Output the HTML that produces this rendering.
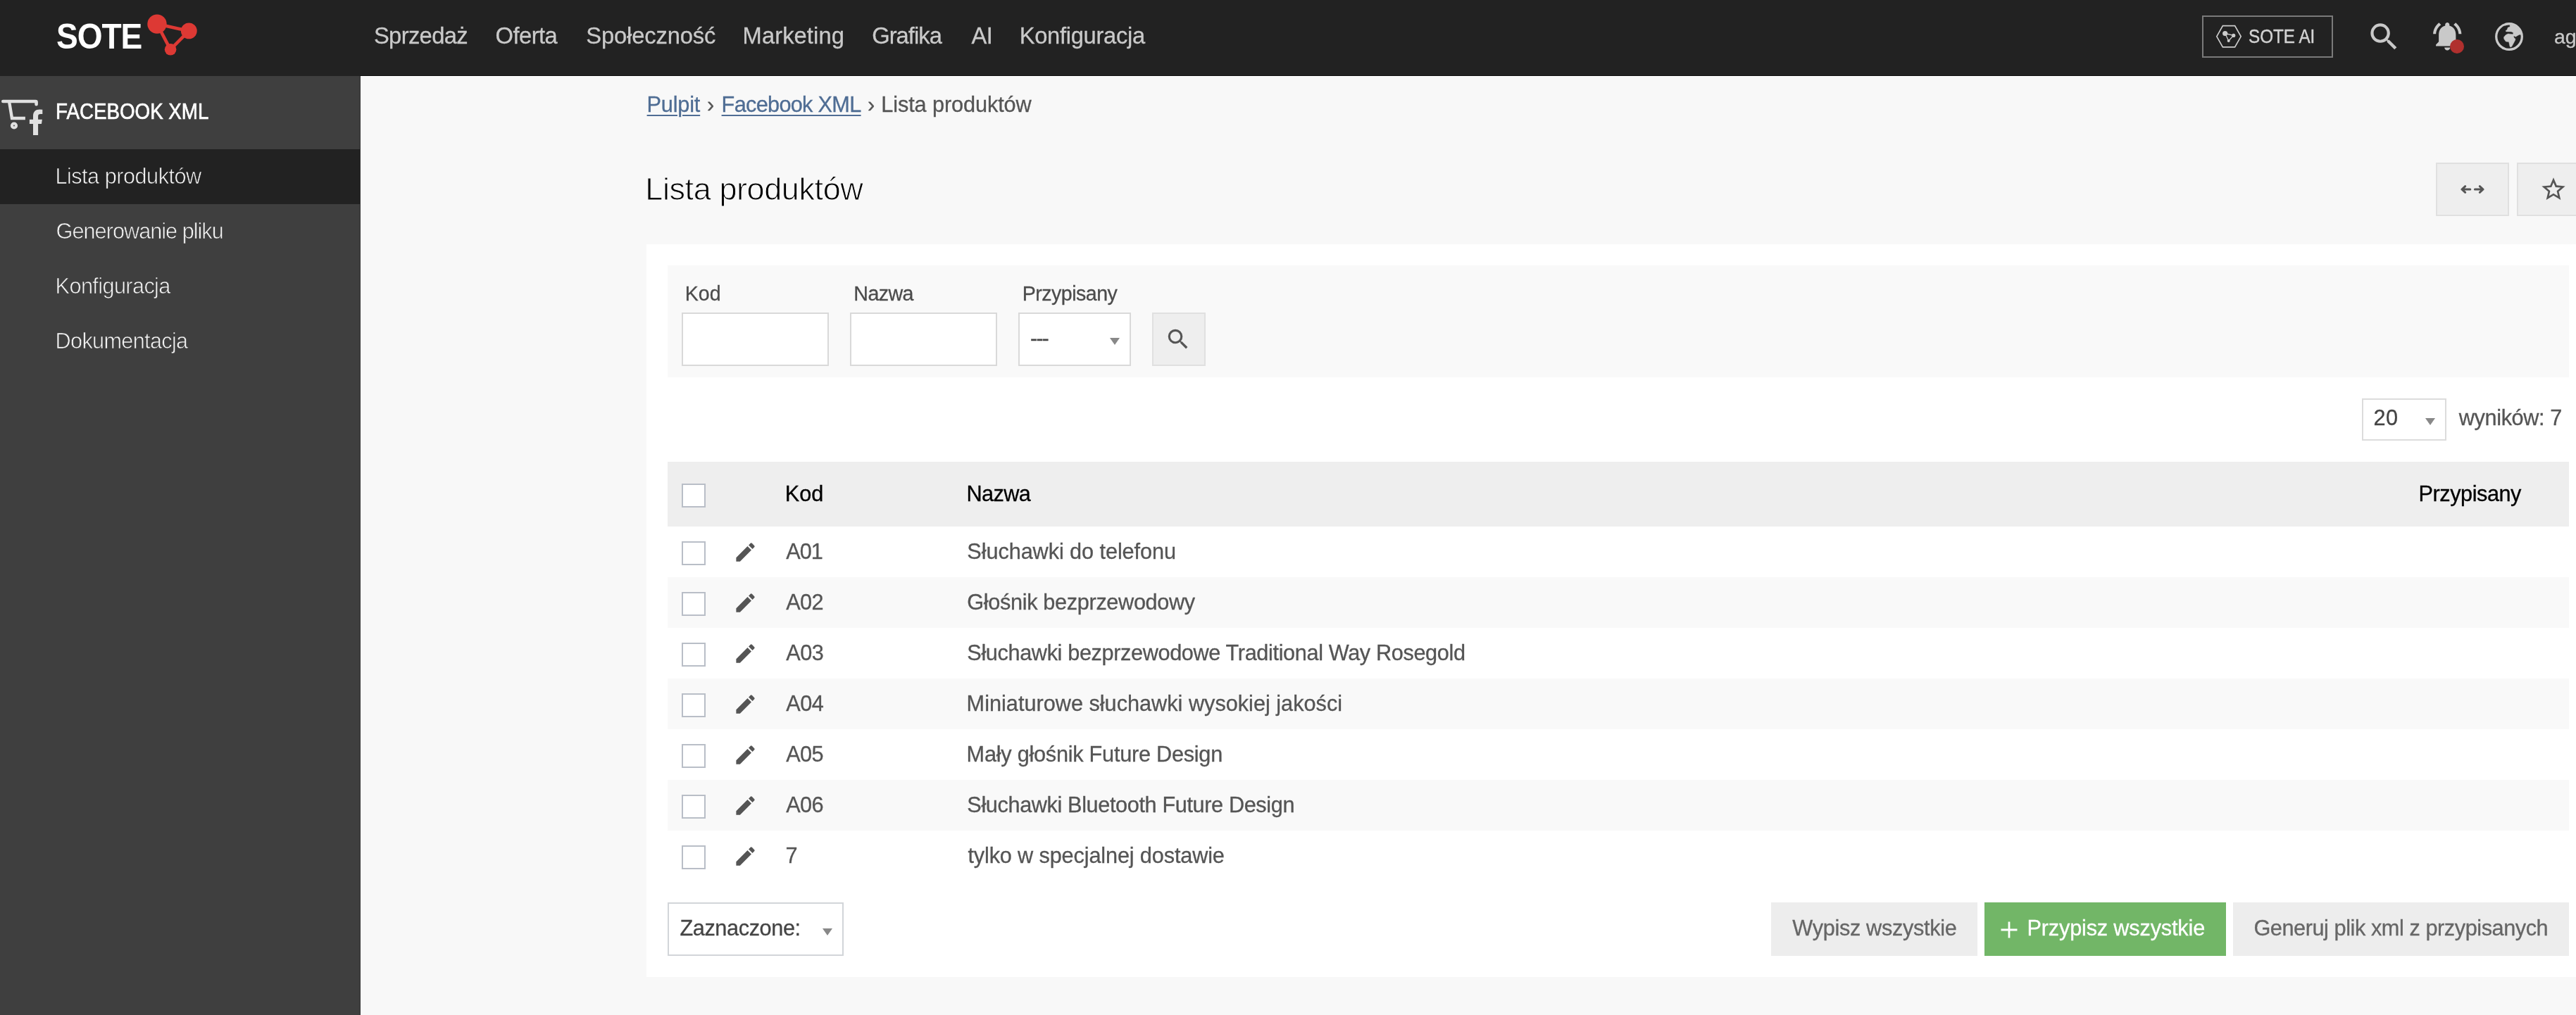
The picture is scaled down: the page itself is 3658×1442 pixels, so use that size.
<!DOCTYPE html>
<html lang="pl">
<head>
<meta charset="utf-8">
<title>Lista produktów - Facebook XML</title>
<style>
*{box-sizing:border-box;margin:0;padding:0}
html,body{width:3658px;height:1442px;overflow:hidden;background:#f8f8f8}
body{position:relative;will-change:transform;font-family:"Liberation Sans",Arial,sans-serif;font-size:30.7px;color:#555;-webkit-text-stroke:.3px}
a{color:inherit;text-decoration:none}
.abs,.t{position:absolute;white-space:nowrap}
.t{line-height:35px}
svg{position:absolute;display:block;overflow:visible}

/* top bar */
#top{position:absolute;left:0;top:0;width:3658px;height:108px;background:#222;color:#c9c9c9;border-bottom:1px solid #222}
#top:after{content:"";position:absolute;left:511px;top:107px;width:3147px;height:1px;background:#121212}
#logo{font-weight:bold;color:#fff;font-size:50.5px;line-height:57px;left:79.5px;top:23px;-webkit-text-stroke:0}
#nav a{font-size:32.7px;line-height:37px;top:32px}
#ai{left:3127px;top:22px;width:186px;height:60px;border:2px solid #7a7a7a}
#ai .t{font-size:26.9px;line-height:30px;left:64px;top:12.6px;color:#d2d2d2;-webkit-text-stroke:.45px #d2d2d2}
#user{font-size:28.5px;line-height:32px;left:3627px;top:36px}

/* sidebar */
#side{position:absolute;left:0;top:108px;width:512px;height:1334px;background:#3f3f3f;color:#e6e6e6;border-right:1px solid #333}
main:before{content:"";position:absolute;left:512px;top:108px;width:3146px;height:1334px;border-left:1px solid #fff;border-top:1px solid #fff}
#side .on{position:absolute;left:0;top:104px;width:511px;height:78px;background:#222}
#mod{font-size:31px;font-weight:normal;-webkit-text-stroke:.7px #fff;color:#fff;left:79px;top:32.7px}
#side li{list-style:none}
#side li a{font-size:30.7px;left:80px;color:#f4f4f4;-webkit-text-stroke:.7px #3f3f3f}
#side li a#s1{-webkit-text-stroke-color:#222}

/* main */
#crumbs .t{font-size:30.7px;top:131px}
#crumbs a{color:#4f6d94;text-decoration:underline;text-decoration-thickness:2px;text-underline-offset:4px}
h1.t{font-weight:normal;font-size:45px;color:#000;-webkit-text-stroke:1px #f8f8f8;line-height:51px;left:917.5px;top:242.8px}
.ibtn{position:absolute;background:#eee;border:2px solid #e0e0e0}
#panel{position:absolute;left:918px;top:347px;width:2760px;height:1041px;background:#fff}
#filter{position:absolute;left:30px;top:30px;width:2700px;height:159px;background:#f9f9f9}
#filter label{font-size:28.6px;line-height:32px;top:24px;color:#4c4c4c}
.inp{position:absolute;background:#fff;border:2px solid #d9d9d9;border-radius:0;outline:0;font:inherit;display:block}
.arrow{position:absolute;width:0;height:0;border-left:7.5px solid transparent;border-right:7.5px solid transparent;border-top:10px solid #888}
#pager .t{top:229px}
table{position:absolute;left:30px;top:309px;width:2700px;border-collapse:collapse;table-layout:fixed}
th,td{text-align:left;font-weight:normal;font-size:30.7px;line-height:35px;padding:18px 0 0;vertical-align:top;white-space:nowrap;position:relative}
th{padding-top:28px}
thead tr{height:92px;background:#eee;color:#000}
tbody tr{height:72px}
tbody tr:nth-child(even){background:#f9f9f9}
.cb{position:absolute;left:20px;top:21px;width:34px;height:34px;background:#fff;border:2px solid #b9bec7;border-radius:0;margin:0;appearance:none;-webkit-appearance:none;display:block}
thead .cb{top:31px}
td svg{left:19.4px;top:18.7px}
.btn{position:absolute;top:935px;height:76px;background:#ededed;color:#666}
.btn .t{top:19px}

/* per-element width fitting (Roboto metrics -> Liberation Sans) */
#logo{letter-spacing:-1.2px;transform:scaleX(.913);transform-origin:0 0}
#aitxt{transform:scaleX(.902);transform-origin:0 0}
#mod{transform:scaleX(.895);transform-origin:0 0}
th span,td span{position:relative}
/*FIT*/
#n1{letter-spacing:-0.62px;margin-left:-0.5px}
#n2{letter-spacing:-0.52px;margin-left:-0.2px}
#n3{letter-spacing:-0.13px;margin-left:0.7px}
#n4{letter-spacing:0.09px;margin-left:0.6px}
#n5{letter-spacing:-0.95px;margin-left:0.4px}
#n6{letter-spacing:-0.58px;margin-left:0.6px}
#n7{letter-spacing:-0.30px;margin-left:0.3px}
#s1{letter-spacing:-0.51px;margin-left:-1.6px}
#s2{letter-spacing:-1.00px;margin-left:-0.4px}
#s3{letter-spacing:-0.62px;margin-left:-1.4px}
#s4{letter-spacing:-0.69px;margin-left:-1.4px}
#c1{letter-spacing:-0.20px}
#c3{letter-spacing:-0.70px}
#c5{letter-spacing:-0.10px;margin-left:-0.4px}
#h1{letter-spacing:-0.41px;margin-left:-1.2px}
#f1{letter-spacing:0.03px;margin-left:-0.3px}
#f2{letter-spacing:-0.55px;margin-left:-0.1px}
#f3{letter-spacing:-0.52px;margin-left:0.1px}
#p1{letter-spacing:0.41px;margin-left:-0.4px}
#p2{letter-spacing:-0.39px;margin-left:-0.2px}
#h_kod{letter-spacing:-0.10px;margin-left:-1.2px}
#h_naz{letter-spacing:-0.60px;margin-left:-1.5px}
#h_prz{letter-spacing:-0.46px;margin-left:-1.5px}
#k1{letter-spacing:-0.99px;margin-left:0.2px}
#k2{letter-spacing:-0.55px;margin-left:0.2px}
#r1{letter-spacing:-0.09px;margin-left:-0.7px}
#r2{letter-spacing:-0.35px;margin-left:-0.7px}
#r3{letter-spacing:-0.38px;margin-left:-0.7px}
#r4{letter-spacing:-0.01px;margin-left:-1.4px}
#r5{letter-spacing:-0.26px;margin-left:-1.4px}
#r6{letter-spacing:-0.39px;margin-left:-0.7px}
#r7{letter-spacing:-0.15px;margin-left:0.4px}
#z1{letter-spacing:-0.40px;margin-left:-0.6px}
#b1{letter-spacing:-0.33px;margin-left:-0.4px}
#b2{letter-spacing:-0.18px;margin-left:-0.5px}
#b3{letter-spacing:-0.44px;margin-left:-0.6px}
#k3{letter-spacing:-0.53px;margin-left:0.2px}
#k4{letter-spacing:-0.52px;margin-left:0.2px}
#k5{letter-spacing:-0.55px;margin-left:0.2px}
#k6{letter-spacing:-0.58px;margin-left:0.2px}
#k7{letter-spacing:7.18px;margin-left:-0.5px}
/*ENDFIT*/
</style>
</head>
<body>

<header id="top">
  <a class="t" id="logo">SOTE</a>
  <svg id="logoicon" style="left:200px;top:0" width="100" height="108" viewBox="200 0 100 108">
    <g stroke="#dd3934" stroke-width="4.6" fill="none"><path d="M223 34 L268.3 44 L242 70.3 Z"/></g>
    <g fill="#dd3934"><circle cx="223" cy="34.1" r="13.7"/><circle cx="268.3" cy="43.9" r="11.4"/><circle cx="242.1" cy="70.3" r="8.3"/></g>
  </svg>
  <nav id="nav">
    <a class="t" id="n1" style="left:531.4px">Sprzedaż</a>
    <a class="t" id="n2" style="left:703.7px">Oferta</a>
    <a class="t" id="n3" style="left:831.6px">Społeczność</a>
    <a class="t" id="n4" style="left:1054px">Marketing</a>
    <a class="t" id="n5" style="left:1237.8px">Grafika</a>
    <a class="t" id="n6" style="left:1379px">AI</a>
    <a class="t" id="n7" style="left:1447.4px">Konfiguracja</a>
  </nav>
  <a class="abs" id="ai">
    <svg style="left:16px;top:8px" width="40" height="36" viewBox="3145 32 40 36">
      <path d="M3147.8 51.8 L3156.4 36.7 H3173.6 L3182.2 51.8 L3173.6 66.9 H3156.4 Z" fill="none" stroke="#ccc" stroke-width="1.7"/>
      <path d="M3159.7 47.5 L3171.7 50.4 L3164.7 58 Z" fill="none" stroke="#ccc" stroke-width="1.3"/>
      <circle cx="3159.7" cy="47.5" r="3.6" fill="#ccc"/><circle cx="3171.7" cy="50.4" r="2.6" fill="#ccc"/><circle cx="3164.7" cy="58" r="2" fill="#ccc"/>
    </svg>
    <span class="t" id="aitxt">SOTE AI</span>
  </a>
  <svg style="left:3360.45px;top:26.55px" width="50.8" height="50.8" viewBox="0 0 24 24" fill="#c9c9c9"><path d="M15.5 14h-.79l-.28-.27A6.471 6.471 0 0 0 16 9.5 6.5 6.5 0 1 0 9.5 16c1.61 0 3.09-.59 4.23-1.57l.27.28v.79l5 4.99L20.49 19l-4.99-5zm-6 0C7.01 14 5 11.99 5 9.5S7.01 5 9.5 5 14 7.01 14 9.5 11.99 14 9.5 14z"/></svg>
  <svg style="left:3450.9px;top:27.3px" width="48.5" height="48.5" viewBox="0 0 24 24" fill="#c9c9c9"><path d="M7.58 4.08L6.15 2.65C3.75 4.48 2.17 7.3 2.03 10.5h2c.15-2.65 1.51-4.97 3.55-6.42zm12.39 6.42h2c-.15-3.2-1.73-6.02-4.12-7.85l-1.42 1.43c2.02 1.45 3.39 3.77 3.54 6.42zM18 11c0-3.07-1.64-5.64-4.5-6.32V4c0-.83-.67-1.5-1.5-1.5s-1.5.67-1.5 1.5v.68C7.63 5.36 6 7.92 6 11v5l-2 2v1h16v-1l-2-2v-5zm-6 11c.14 0 .27-.01.4-.04.65-.14 1.18-.58 1.44-1.18.1-.24.15-.5.15-.78h-4c.01 1.1.9 2 2.01 2z"/></svg>
  <div class="abs" style="left:3479px;top:56px;width:20px;height:20px;border-radius:50%;background:#b0302e"></div>
  <svg style="left:3535px;top:25px" width="56" height="54" viewBox="0 0 1053 1015">
    <circle cx="527" cy="508" r="344" fill="none" stroke="#c9c9c9" stroke-width="62"/>
    <path d="M545 186 L550 245 L495 262 L470 330 L435 350 L445 374 L585 378 L640 405 L630 445 L580 440 L500 430 L440 460 L385 520 L390 570 L440 640 L520 650 L545 770 L565 790 L600 770 L660 660 L690 600 L695 570 L660 540 L645 500 L665 492 L700 512 L740 490 L800 455 L848 456 A325 325 0 0 0 545 186 Z" fill="#c9c9c9" stroke="#c9c9c9" stroke-width="8" stroke-linejoin="round"/>
  </svg>
  <span class="t" id="user">ag</span>
</header>

<aside id="side">
  <svg style="left:0;top:28px" width="64" height="60" viewBox="0 136 64 60">
    <path d="M4.3 144 H50.5 Q51.6 144 51.6 145.1 V148.3" fill="none" stroke="#e0e0e0" stroke-width="4.6" stroke-linecap="round" stroke-linejoin="round"/>
    <path d="M13 144 L17 168 H35.9" fill="none" stroke="#e0e0e0" stroke-width="4.4" stroke-linejoin="miter"/>
    <circle cx="20" cy="178.5" r="3" fill="none" stroke="#e0e0e0" stroke-width="4.2"/>
    <path d="M47 192 V176 H41.9 V169.7 H47 V165 C47 158.6 50.6 155.5 56.4 155.5 Q58.6 155.5 60.3 155.8 V162 H57.6 C54.9 162 54.1 163 54.1 165.3 V169.7 H59.9 L59 176 H54.1 V192 Z" fill="#e0e0e0"/>
  </svg>
  <span class="t" id="mod">FACEBOOK XML</span>
  <div class="on"></div>
  <ul>
    <li><a class="t" id="s1" style="top:125px">Lista produktów</a></li>
    <li><a class="t" id="s2" style="top:203px">Generowanie pliku</a></li>
    <li><a class="t" id="s3" style="top:281px">Konfiguracja</a></li>
    <li><a class="t" id="s4" style="top:359px">Dokumentacja</a></li>
  </ul>
</aside>

<main>
  <div id="crumbs">
    <a class="t" id="c1" style="left:918.6px">Pulpit</a>
    <span class="t" id="c2" style="left:1004px">›</span>
    <a class="t" id="c3" style="left:1024.6px">Facebook XML</a>
    <span class="t" id="c4" style="left:1232px">›</span>
    <span class="t" id="c5" style="left:1251.6px">Lista produktów</span>
  </div>
  <h1 class="t" id="h1">Lista produktów</h1>
  <div class="ibtn" style="left:3459px;top:231px;width:104px;height:76px">
    <svg style="left:33px;top:30px" width="34" height="12" viewBox="0 0 34 12" fill="none" stroke="#555" stroke-width="3" stroke-linecap="round" stroke-linejoin="round"><path d="M13.8 6 H2 M6.7 1.7 L1.9 6 L6.7 10.3 M20.4 6 H32 M27.3 1.7 L32.1 6 L27.3 10.3"/></svg>
  </div>
  <div class="ibtn" style="left:3574px;top:231px;width:104px;height:76px">
    <svg style="left:29.9px;top:16.3px" width="40" height="40" viewBox="0 0 24 24" fill="#555"><path d="M22 9.240l-7.190-.62L12 2 9.190 8.630 2 9.240l5.460 4.730L5.820 21 12 17.270 18.180 21l-1.630-7.030L22 9.240zM12 15.400l-3.760 2.270 1-4.280-3.320-2.880 4.380-.38L12 6.100l1.710 4.040 4.380.38-3.320 2.880 1 4.280L12 15.400z"/></svg>
  </div>

  <section id="panel">
    <form id="filter">
      <label class="t" id="f1" style="left:25px">Kod</label>
      <input class="inp" type="text" style="left:20px;top:67px;width:209px;height:76px">
      <label class="t" id="f2" style="left:264.4px">Nazwa</label>
      <input class="inp" type="text" style="left:259px;top:67px;width:209px;height:76px">
      <label class="t" id="f3" style="left:503.6px">Przypisany</label>
      <div class="inp" style="left:498px;top:67px;width:160px;height:76px">
        <span class="t" id="f4" style="left:15px;top:20px;font-size:30px;line-height:30px;color:#444;letter-spacing:-1.6px">---</span>
        <i class="arrow" style="left:128px;top:34px"></i>
      </div>
      <div class="ibtn" style="left:688px;top:67px;width:76px;height:76px">
        <svg style="left:16px;top:17px" width="38" height="38" viewBox="0 0 24 24" fill="#555"><path d="M15.5 14h-.79l-.28-.27A6.471 6.471 0 0 0 16 9.5 6.500 6.500 0 1 0 9.500 16c1.610 0 3.090-.59 4.230-1.570l.27.28v.79l5 4.990L20.490 19l-4.990-5zm-6 0C7.010 14 5 11.990 5 9.500S7.010 5 9.500 5 14 7.010 14 9.500 11.990 14 9.500 14z"/></svg>
      </div>
    </form>

    <div id="pager">
      <div class="inp" style="left:2436px;top:219px;width:120px;height:60px;border-color:#dcdcdc">
        <span class="t" id="p1" style="left:15px;top:8px;color:#444">20</span>
        <i class="arrow" style="left:88px;top:26px;border-left-width:7px;border-right-width:7px"></i>
      </div>
      <span class="t" id="p2" style="left:2574px">wyników: 7</span>
    </div>

    <table>
      <colgroup><col style="width:74px"><col style="width:94px"><col style="width:258px"><col style="width:2062px"><col></colgroup>
      <thead>
        <tr><th><input type="checkbox" class="cb"></th><th></th><th><span id="h_kod">Kod</span></th><th><span id="h_naz">Nazwa</span></th><th><span id="h_prz">Przypisany</span></th></tr>
      </thead>
      <tbody>
        <tr><td><input type="checkbox" class="cb"></td><td><svg width="35" height="35" viewBox="0 0 24 24" fill="#555"><path d="M3 17.250V21h3.750L17.810 9.940l-3.750-3.750L3 17.250zM20.710 7.040a.996.996 0 0 0 0-1.410l-2.340-2.340a.996.996 0 0 0-1.410 0l-1.830 1.830 3.750 3.750 1.830-1.830z"/></svg></td><td><span id="k1">A01</span></td><td><span id="r1">Słuchawki do telefonu</span></td><td></td></tr>
        <tr><td><input type="checkbox" class="cb"></td><td><svg width="35" height="35" viewBox="0 0 24 24" fill="#555"><path d="M3 17.250V21h3.750L17.810 9.940l-3.750-3.750L3 17.250zM20.710 7.040a.996.996 0 0 0 0-1.410l-2.340-2.340a.996.996 0 0 0-1.410 0l-1.830 1.830 3.750 3.750 1.830-1.830z"/></svg></td><td><span id="k2">A02</span></td><td><span id="r2">Głośnik bezprzewodowy</span></td><td></td></tr>
        <tr><td><input type="checkbox" class="cb"></td><td><svg width="35" height="35" viewBox="0 0 24 24" fill="#555"><path d="M3 17.250V21h3.750L17.810 9.940l-3.750-3.750L3 17.250zM20.710 7.040a.996.996 0 0 0 0-1.410l-2.340-2.340a.996.996 0 0 0-1.410 0l-1.830 1.830 3.750 3.750 1.830-1.830z"/></svg></td><td><span id="k3">A03</span></td><td><span id="r3">Słuchawki bezprzewodowe Traditional Way Rosegold</span></td><td></td></tr>
        <tr><td><input type="checkbox" class="cb"></td><td><svg width="35" height="35" viewBox="0 0 24 24" fill="#555"><path d="M3 17.250V21h3.750L17.810 9.940l-3.750-3.750L3 17.250zM20.710 7.040a.996.996 0 0 0 0-1.410l-2.340-2.340a.996.996 0 0 0-1.410 0l-1.830 1.830 3.750 3.750 1.830-1.830z"/></svg></td><td><span id="k4">A04</span></td><td><span id="r4">Miniaturowe słuchawki wysokiej jakości</span></td><td></td></tr>
        <tr><td><input type="checkbox" class="cb"></td><td><svg width="35" height="35" viewBox="0 0 24 24" fill="#555"><path d="M3 17.250V21h3.750L17.810 9.940l-3.750-3.750L3 17.250zM20.710 7.040a.996.996 0 0 0 0-1.410l-2.340-2.340a.996.996 0 0 0-1.410 0l-1.830 1.830 3.750 3.750 1.830-1.830z"/></svg></td><td><span id="k5">A05</span></td><td><span id="r5">Mały głośnik Future Design</span></td><td></td></tr>
        <tr><td><input type="checkbox" class="cb"></td><td><svg width="35" height="35" viewBox="0 0 24 24" fill="#555"><path d="M3 17.250V21h3.750L17.810 9.940l-3.750-3.750L3 17.250zM20.710 7.040a.996.996 0 0 0 0-1.410l-2.340-2.340a.996.996 0 0 0-1.410 0l-1.830 1.830 3.750 3.750 1.830-1.830z"/></svg></td><td><span id="k6">A06</span></td><td><span id="r6">Słuchawki Bluetooth Future Design</span></td><td></td></tr>
        <tr><td><input type="checkbox" class="cb"></td><td><svg width="35" height="35" viewBox="0 0 24 24" fill="#555"><path d="M3 17.250V21h3.750L17.810 9.940l-3.750-3.750L3 17.250zM20.710 7.040a.996.996 0 0 0 0-1.410l-2.340-2.340a.996.996 0 0 0-1.410 0l-1.830 1.830 3.750 3.750 1.830-1.830z"/></svg></td><td><span id="k7">7</span></td><td><span id="r7">tylko w specjalnej dostawie</span></td><td></td></tr>
      </tbody>
    </table>

    <div class="inp" style="left:30px;top:935px;width:250px;height:76px;border-color:#d2d5d9">
      <span class="t" id="z1" style="left:16px;top:17.4px;color:#444">Zaznaczone:</span>
      <i class="arrow" style="left:218px;top:34.5px"></i>
    </div>
    <a class="btn" style="left:1597px;width:293px"><span class="t" id="b1" style="left:30.7px">Wypisz wszystkie</span></a>
    <a class="btn" style="left:1900px;width:343px;background:#72b667;color:#fff">
      <svg style="left:23px;top:27px" width="24" height="24" viewBox="0 0 24 24" stroke="#fff" stroke-width="2.8" fill="none"><path d="M12 0.500 V23.500 M0.500 12 H23.500"/></svg>
      <span class="t" id="b2" style="left:61px">Przypisz wszystkie</span>
    </a>
    <a class="btn" style="left:2253px;width:477px"><span class="t" id="b3" style="left:30px">Generuj plik xml z przypisanych</span></a>
  </section>
</main>

</body>
</html>
